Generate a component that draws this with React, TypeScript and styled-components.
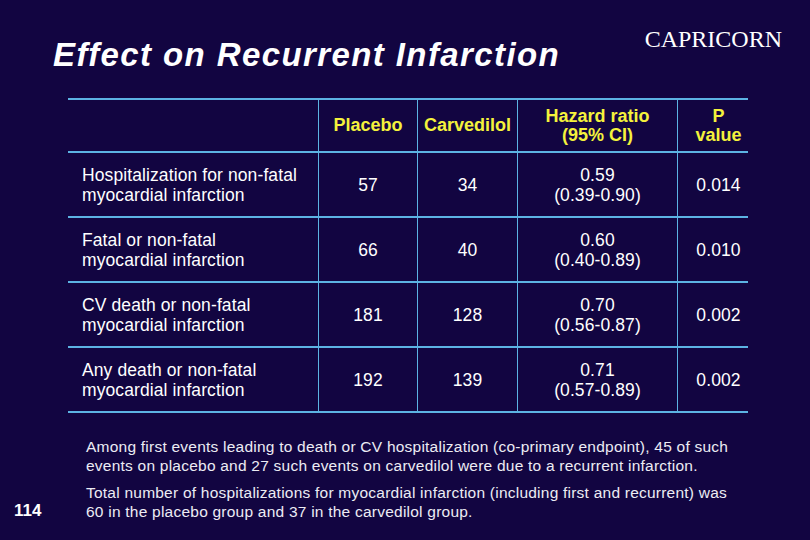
import React from "react";
import styled, { createGlobalStyle } from "styled-components";

const Global = createGlobalStyle`
  html, body { margin: 0; padding: 0; background: #120541; }
  #root { width: 810px; height: 540px; }
`;

const Slide = styled.div`
  width: 810px;
  height: 540px;
  background: #120541;
  color: #ffffff;
  font-family: "Liberation Sans", Arial, sans-serif;
  display: flex;
  flex-direction: column;
  overflow: hidden;
`;

const Header = styled.div`
  height: 98px;
  display: flex;
  justify-content: space-between;
  align-items: flex-start;
`;

const Title = styled.h1`
  margin: 38px 0 0 53px;
  font-size: 33px;
  line-height: 1;
  font-weight: bold;
  font-style: italic;
  letter-spacing: 1.4px;
`;

const Brand = styled.div`
  margin: 27px 28px 0 0;
  font-family: "Liberation Serif", "Times New Roman", serif;
  font-size: 24px;
  line-height: 1;
`;

const Table = styled.div`
  margin-left: 68px;
  width: 680px;
  display: grid;
  grid-template-columns: 250px 99px 100px 160px 71px;
  grid-template-rows: 53px repeat(4, 65px);
  border-top: 2px solid #5cb3e3;
`;

const Cell = styled.div<{ $head?: boolean; $first?: boolean; $last?: boolean }>`
  display: flex;
  align-items: center;
  justify-content: ${(p) => (p.$first ? "flex-start" : "center")};
  text-align: ${(p) => (p.$first ? "left" : "center")};
  padding-left: ${(p) => (p.$first ? "14px" : p.$last ? "11px" : "0")};
  border-bottom: 2px solid #5cb3e3;
  border-left: ${(p) => (p.$first ? "none" : "1px solid #5cb3e3")};
  color: ${(p) => (p.$head ? "#f4f23c" : "#ffffff")};
  font-weight: ${(p) => (p.$head ? "bold" : "normal")};
  font-size: ${(p) => (p.$head ? "18px" : "17.5px")};
  line-height: ${(p) => (p.$head ? "19px" : "20px")};
  letter-spacing: ${(p) => (p.$head ? "0" : "0.1px")};
`;

const Footer = styled.div`
  margin-top: 24px;
  display: grid;
  grid-template-columns: 86px 1fr;
`;

const PageNum = styled.div`
  align-self: end;
  padding-left: 14px;
  font-size: 17px;
  font-weight: bold;
  line-height: 19px;
  padding-bottom: 1px;
`;

const Notes = styled.div`
  display: flex;
  flex-direction: column;
  gap: 8px;
`;

const Note = styled.p`
  margin: 0;
  font-size: 15.5px;
  line-height: 19px;
  letter-spacing: 0.23px;
  white-space: nowrap;
  color: #ececf4;
`;

const headers = ["", "Placebo", "Carvedilol", "Hazard ratio\n(95% CI)", "P\nvalue"];

const rows = [
  ["Hospitalization for non-fatal\nmyocardial infarction", "57", "34", "0.59\n(0.39-0.90)", "0.014"],
  ["Fatal or non-fatal\nmyocardial infarction", "66", "40", "0.60\n(0.40-0.89)", "0.010"],
  ["CV death or non-fatal\nmyocardial infarction", "181", "128", "0.70\n(0.56-0.87)", "0.002"],
  ["Any death or non-fatal\nmyocardial infarction", "192", "139", "0.71\n(0.57-0.89)", "0.002"],
];

const notes = [
  "Among first events leading to death or CV hospitalization (co-primary endpoint), 45 of such\nevents on placebo and 27 such events on carvedilol were due to a recurrent infarction.",
  "Total number of hospitalizations for myocardial infarction (including first and recurrent) was\n60 in the placebo group and 37 in the carvedilol group.",
];

const Lines = ({ text }: { text: string }) => (
  <span>
    {text.split("\n").map((t, i) => (
      <React.Fragment key={i}>
        {i > 0 && <br />}
        {t}
      </React.Fragment>
    ))}
  </span>
);

export default function App() {
  return (
    <Slide>
      <Global />
      <Header>
        <Title>Effect on Recurrent Infarction</Title>
        <Brand>CAPRICORN</Brand>
      </Header>
      <Table>
        {headers.map((h, i) => (
          <Cell key={"h" + i} $head $first={i === 0} $last={i === 4}>
            <Lines text={h} />
          </Cell>
        ))}
        {rows.map((r, ri) =>
          r.map((c, ci) => (
            <Cell key={ri + "-" + ci} $first={ci === 0} $last={ci === 4}>
              <Lines text={c} />
            </Cell>
          ))
        )}
      </Table>
      <Footer>
        <PageNum>114</PageNum>
        <Notes>
          {notes.map((n, i) => (
            <Note key={i}>
              <Lines text={n} />
            </Note>
          ))}
        </Notes>
      </Footer>
    </Slide>
  );
}
